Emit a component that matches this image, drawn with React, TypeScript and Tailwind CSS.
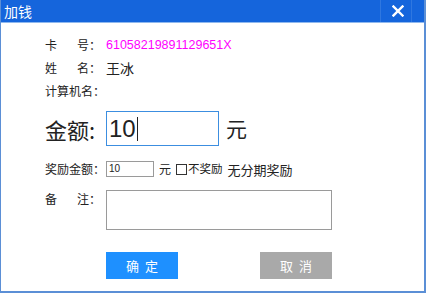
import React from "react";

const cjk = { fontFamily: '"Noto Sans CJK SC", "Noto Sans", sans-serif' };

export default function App() {
  return (
    <div
      className="w-[426px] h-[293px] bg-white flex flex-col border-l border-r-2 border-b-2 border-[#5b8fd6] overflow-hidden"
      style={cjk}
    >
      <div className="h-[22px] bg-[#1565dc] flex items-center relative shrink-0">
        <span className="text-white text-[14px] leading-none ml-[3px]">加钱</span>
        <div className="absolute left-[379px] top-0 h-[22px] w-px bg-[#2f77e0]" />
        <div className="absolute left-[410px] top-0 h-[22px] w-px bg-[#2f77e0]" />
        <svg className="absolute left-[391px] top-[5px]" width="12" height="12" viewBox="0 0 12 12">
          <path d="M1.5 1.5 L10.5 10.5 M10.5 1.5 L1.5 10.5" stroke="white" strokeWidth="2.4" strokeLinecap="square" />
        </svg>
      </div>
      <div className="h-px bg-[#8fb8ee] shrink-0" />
      <div className="flex flex-col pl-[44px] text-[#222]">
        <div className="flex items-center h-[16px] mt-[14px]">
          <div className="w-[61px] flex text-[12px] leading-none">
            <span>卡</span>
            <span className="ml-[20px]">号：</span>
          </div>
          <span className="text-[12.5px] text-[#ff00ff] leading-none" style={{ fontFamily: '"Liberation Sans", sans-serif' }}>
            61058219891129651X
          </span>
        </div>
        <div className="flex items-center h-[16px] mt-[7px]">
          <div className="w-[61px] flex text-[12px] leading-none">
            <span>姓</span>
            <span className="ml-[20px]">名：</span>
          </div>
          <span className="text-[14px] leading-none">王冰</span>
        </div>
        <div className="flex items-center h-[16px] mt-[7px]">
          <div className="w-[61px] text-[12px] leading-none">计算机名：</div>
        </div>
        <div className="flex items-center mt-[12px]">
          <div className="w-[61px] text-[22px] leading-none">金额:</div>
          <div className="w-[113px] h-[35px] border border-[#3c8ee0] flex items-center pl-[2px]">
            <span className="text-[24px] leading-none" style={{ fontFamily: '"Liberation Sans", sans-serif' }}>10</span>
            <span className="w-px h-[24px] bg-[#222] ml-[1px]" />
          </div>
          <span className="text-[21px] leading-none ml-[7px]">元</span>
        </div>
        <div className="flex items-center h-[16px] mt-[15px]">
          <div className="w-[61px] text-[12px] leading-none">奖励金额：</div>
          <div className="w-[48px] h-[16px] border border-[#9a9a9a] flex items-center pl-[2px]">
            <span className="text-[10px] leading-none" style={{ fontFamily: '"Liberation Sans", sans-serif' }}>10</span>
          </div>
          <span className="text-[12px] leading-none ml-[5px]">元</span>
          <span className="w-[11px] h-[11px] border border-[#333] ml-[5px]" />
          <span className="text-[11.5px] leading-none ml-[1px]">不奖励</span>
          <span className="text-[13px] leading-none ml-[5px]">无分期奖励</span>
        </div>
        <div className="flex items-start mt-[13px]">
          <div className="w-[61px] flex text-[12px] leading-none mt-[3px]">
            <span>备</span>
            <span className="ml-[20px]">注：</span>
          </div>
          <div className="w-[226px] h-[40px] border border-[#9a9a9a]" />
        </div>
        <div className="flex mt-[22px] ml-[61px]">
          <button className="w-[72px] h-[27px] bg-[#1e90ff] text-white text-[13px] tracking-[6px] pl-[6px]">确定</button>
          <button className="w-[72px] h-[27px] bg-[#a9a9a9] text-white text-[13px] tracking-[6px] pl-[6px] ml-[82px]">取消</button>
        </div>
      </div>
    </div>
  );
}
